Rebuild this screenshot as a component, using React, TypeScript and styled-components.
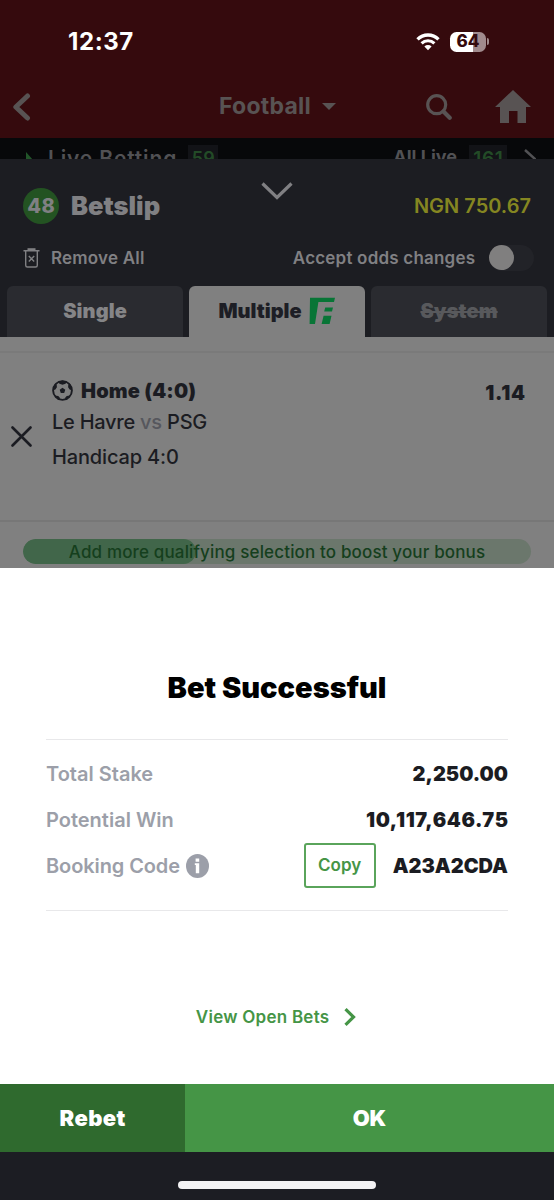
import React from 'react';
import styled, { createGlobalStyle } from 'styled-components';

const GlobalStyle = createGlobalStyle`
  * { box-sizing: border-box; }
  body { margin: 0; background: #1c1d23; }
  button { border: 0; padding: 0; background: none; font: inherit; color: inherit; }
`;

const Screen = styled.main`
  display: flex;
  flex-direction: column;
  width: 554px;
  height: 1200px;
  overflow: hidden;
  font-family: Inter, 'Liberation Sans', sans-serif;
  background: #1c1d23;
`;

interface LabelProps {
  $size: number;
  $weight?: number;
  $color?: string;
  $track?: number;
}
const Label = styled.span<LabelProps>`
  font-size: ${p => p.$size}px;
  font-weight: ${p => p.$weight ?? 600};
  color: ${p => p.$color ?? 'inherit'};
  letter-spacing: ${p => p.$track ?? 0}px;
  margin-right: ${p => -(p.$track ?? 0)}px;
  line-height: 1.2;
  white-space: nowrap;
`;

const Top = styled.header`
  flex: none;
  height: 138px;
  background: #350a0d;
`;
const StatusBar = styled.div`
  display: flex;
  align-items: center;
  justify-content: space-between;
  height: 83px;
  padding: 0 65px 0 68px;
  color: #fff;
`;
const Clock = styled.div`
  padding-top: 1px;
`;
const StatusIcons = styled.div`
  display: flex;
  align-items: center;
  gap: 10px;
`;
const BatteryWrap = styled.div`
  display: flex;
  align-items: center;
  gap: 1px;
`;
const Battery = styled.div`
  display: flex;
  align-items: center;
  justify-content: center;
  width: 36px;
  height: 20px;
  border-radius: 6.5px;
  background: linear-gradient(90deg, #fff 64%, #a18b8d 64%);
`;
const BatteryTip = styled.div`
  width: 2px;
  height: 7px;
  border-radius: 0 3px 3px 0;
  background: #a18b8d;
`;
const NavBar = styled.nav`
  display: grid;
  grid-template-columns: 207px 1fr 105px;
  align-items: center;
  height: 47px;
  padding: 0 23px 0 12px;
  color: #585353;
`;
const SportPicker = styled.div`
  display: flex;
  align-items: center;
  gap: 11px;
  padding-top: 1px;
`;
const NavActions = styled.div`
  display: flex;
  align-items: center;
  justify-content: space-between;
`;

const LiveStrip = styled.div`
  flex: none;
  display: flex;
  justify-content: space-between;
  height: 21px;
  padding: 7px 18px 0 26px;
  overflow: hidden;
  background: #07080a;
  color: #515154;
`;
const LiveGroup = styled.div`
  display: flex;
  align-items: flex-start;
`;
const LiveTitle = styled.div`
  margin: 1px 12px 0 0;
`;
const LiveCount = styled.div<{ $width: number }>`
  display: flex;
  justify-content: center;
  width: ${p => p.$width}px;
  height: 28px;
  padding-top: 3px;
  background: #121317;
`;

const Betslip = styled.section`
  flex: none;
  display: flex;
  flex-direction: column;
  height: 409px;
  background: #1c1d22;
  color: #808083;
`;
const SlipHeader = styled.div`
  display: grid;
  grid-template-columns: 1fr 32px 1fr;
  height: 79px;
  padding: 15px 23px 0 23px;
`;
const SlipTitle = styled.div`
  display: flex;
  align-items: center;
  gap: 12px;
`;
const CountBadge = styled.div`
  display: flex;
  align-items: center;
  justify-content: center;
  width: 36px;
  height: 36px;
  border-radius: 50%;
  background: #235322;
`;
const Collapse = styled.button`
  align-self: start;
  height: 37px;
`;
const Balance = styled.div`
  display: flex;
  align-items: center;
  justify-content: flex-end;
`;
const SlipOptions = styled.div`
  display: flex;
  align-items: center;
  justify-content: space-between;
  height: 42px;
  padding: 0 20px 2px 23px;
`;
const Option = styled.div`
  display: flex;
  align-items: center;
`;
const RemoveLabel = styled.div`
  margin-left: 11px;
`;
const Toggle = styled.div`
  width: 45px;
  height: 26px;
  margin-left: 14px;
  border-radius: 13px;
  background: #222328;
`;
const Knob = styled.div`
  width: 25px;
  height: 25px;
  border-radius: 50%;
  background: #807f7f;
`;
const Tabs = styled.div`
  display: grid;
  grid-template-columns: repeat(3, 176px);
  gap: 6px;
  height: 57px;
  padding: 6px 7px 0;
`;
const Tab = styled.button<{ $active?: boolean; $disabled?: boolean }>`
  display: flex;
  align-items: center;
  justify-content: center;
  gap: 7px;
  padding-bottom: 1px;
  border-radius: 6px 6px 0 0;
  background: ${p => (p.$active ? '#808080' : '#2a2b30')};
  color: ${p => (p.$active ? '#1d1e25' : p.$disabled ? '#58595c' : '#858587')};
  text-decoration: ${p => (p.$disabled ? 'line-through' : 'none')};
  text-decoration-thickness: 2px;
`;
const SlipBody = styled.div`
  flex: 1;
  background: #808080;
  padding-top: 14px;
  color: #1b1c22;
`;
const Selection = styled.article`
  display: grid;
  grid-template-columns: 41px 1fr auto;
  height: 171px;
  padding: 25px 29px 0 11px;
  border-top: 2px solid #7a7a7a;
  border-bottom: 2px solid #777;
`;
const RemoveCell = styled.div`
  padding-top: 48px;
`;
const Pick = styled.div`
  display: flex;
  flex-direction: column;
`;
const PickLine = styled.div<{ $height: number }>`
  display: flex;
  align-items: center;
  gap: 8px;
  height: ${p => p.$height}px;
`;
const Odds = styled.div`
  padding-top: 3px;
`;
const BonusBar = styled.div`
  display: flex;
  align-items: center;
  height: 25px;
  margin: 17px 23px 0;
  border-radius: 13px;
  background: #6b776c;
  overflow: hidden;
`;
const BonusFill = styled.div`
  flex: none;
  width: 173px;
  height: 25px;
  margin-right: -173px;
  border-radius: 13px;
  background: #41664a;
`;
const BonusText = styled.div`
  flex: none;
  width: 508px;
  padding-top: 1px;
  text-align: center;
  z-index: 1;
`;

const Receipt = styled.section`
  flex: none;
  height: 516px;
  padding: 102px 46px 0;
  background: #fff;
`;
const ReceiptTitle = styled.h1`
  display: flex;
  justify-content: center;
  align-items: center;
  height: 36px;
  margin: 0 0 33px;
  color: #000;
`;
const Details = styled.dl`
  height: 172px;
  margin: 0;
  padding-top: 11px;
  border-top: 1px solid #e8e8ea;
  border-bottom: 1px solid #e8e8ea;
`;
const DetailRow = styled.div`
  display: flex;
  align-items: center;
  justify-content: space-between;
  height: 46px;
`;
const Term = styled.dt`
  display: flex;
  align-items: center;
  gap: 6px;
  color: #9c9fa9;
`;
const Value = styled.dd`
  display: flex;
  align-items: center;
  gap: 17px;
  margin: 0;
  color: #1b1c22;
`;
const CopyButton = styled.button`
  width: 72px;
  height: 45px;
  margin-bottom: 1px;
  border: 2px solid #5aa45b;
  border-radius: 3px;
  color: #459546;
`;
const OpenBets = styled.div`
  display: flex;
  align-items: center;
  justify-content: center;
  gap: 15px;
  height: 30px;
  margin: 91px 2px 0 0;
  color: #459546;
`;
const Actions = styled.div`
  flex: none;
  display: grid;
  grid-template-columns: 185px 1fr;
  height: 68px;
  color: #fff;
`;
const ActionButton = styled.button<{ $primary?: boolean }>`
  background: ${p => (p.$primary ? '#459546' : '#2f6a2e')};
`;
const HomeArea = styled.footer`
  flex: 1;
  display: flex;
  justify-content: center;
  padding-top: 29px;
`;
const HomeIndicator = styled.div`
  width: 198px;
  height: 8px;
  border-radius: 4px;
  background: #f3f2f4;
`;

const WifiIcon = () => (
  <svg width="24" height="18" viewBox="0 0 24 18" fill="none" stroke="#fff">
    <path d="M1.5 6.4C7.3.5 16.7.5 22.5 6.4" strokeWidth="3.3" />
    <path d="M5.6 10.3c3.6-3.5 9.2-3.5 12.8 0" strokeWidth="3.1" />
    <path d="M8.4 13.6a5.1 5.1 0 0 1 7.2 0L12 17.3z" fill="#fff" stroke="none" />
  </svg>
);
const BackIcon = () => (
  <svg width="20" height="28" viewBox="0 0 20 28" fill="none" stroke="currentColor" strokeWidth="5" strokeLinecap="round" strokeLinejoin="round">
    <path d="M15.5 3 3.8 14l11.7 11" />
  </svg>
);
const SearchIcon = () => (
  <svg width="26" height="26" viewBox="0 0 26 26" fill="none" stroke="currentColor">
    <circle cx="10.7" cy="10.7" r="9" strokeWidth="3.2" />
    <path d="m17.5 17.5 6.2 6.2" strokeWidth="4.2" strokeLinecap="round" />
  </svg>
);
const HomeIcon = () => (
  <svg width="36" height="33" viewBox="0 0 36 33" fill="currentColor">
    <path d="M18 0 36 17h-5v16h-8.5V21h-8.5v12H5V17H0z" />
  </svg>
);
const TrashIcon = () => (
  <svg width="17" height="20" viewBox="0 0 17 20" fill="none" stroke="currentColor" strokeWidth="1.4">
    <path d="M.5 2.8h16M2.7 3v14.2c0 1 .7 1.8 1.7 1.8h8.2c1 0 1.7-.8 1.7-1.8V3M5.8 8l5.4 5.5M11.2 8l-5.4 5.5" />
    <path d="M4.5 1.3h8" strokeWidth="2.2" />
  </svg>
);
const BoostLogo = () => (
  <svg width="27" height="28" viewBox="0 0 27 28" fill="#087536">
    <path d="M1 .8H26L25 5H9.4L6 27H.6z" />
    <path d="M16.2 10.5h7.8l-1 4h-7.8zM14.6 18.7h7.9L20.6 27h-8z" />
  </svg>
);
const BallIcon = () => (
  <svg width="21" height="21" viewBox="0 0 21 21" fill="none" stroke="currentColor">
    <circle cx="10.5" cy="10.5" r="9.4" strokeWidth="1.9" />
    <path fill="currentColor" stroke="none" d="m10.5 7.8 2.8 2-1.1 3.3H8.8L7.7 9.8zM6 1.7l1.5 2.1 3 .9 3-.9L15 1.7 10.5.6zM1 10.2l2.4-.8 1.5-2.2-.2-2.8-2-.4zM20 10.2l-2.4-.8-1.5-2.2.2-2.8 2-.4zM2.8 15.4l3.4.6 1.5 1.6.3 2.4-2 0zM18.2 15.4l-3.4.6-1.5 1.6-.3 2.4 2 0z" />
  </svg>
);
const InfoIcon = () => (
  <svg width="23" height="24" viewBox="0 0 23 24">
    <ellipse cx="11.5" cy="12" rx="11.5" ry="12" fill="#9c9fa9" />
    <path d="M9.6 4.6h3.6v3.1H9.6zM8.8 9.3h4.4v10H9.8v-8.2h-1z" fill="#fff" />
  </svg>
);

export default function App() {
  return (
    <>
      <GlobalStyle />
      <Screen>
        <Top>
          <StatusBar>
            <Clock><Label $size={24} $weight={700} $track={0.6}>12:37</Label></Clock>
            <StatusIcons>
              <WifiIcon />
              <BatteryWrap>
                <Battery><Label $size={17} $weight={800} $track={0.2} $color="#350a0d">64</Label></Battery>
                <BatteryTip />
              </BatteryWrap>
            </StatusIcons>
          </StatusBar>
          <NavBar>
            <BackIcon />
            <SportPicker>
              <Label $size={23} $weight={700} $track={0.25}>Football</Label>
              <svg width="14" height="8" viewBox="0 0 14 8" fill="currentColor"><path d="M0 0h14L7 7z" /></svg>
            </SportPicker>
            <NavActions><SearchIcon /><HomeIcon /></NavActions>
          </NavBar>
        </Top>

        <LiveStrip>
          <LiveGroup>
            <svg width="22" height="24" viewBox="0 0 22 24"><path d="M0 7 7 15 0 22z" fill="#22552a" /></svg>
            <LiveTitle><Label $size={21} $weight={600} $track={0.85}>Live Betting</Label></LiveTitle>
            <LiveCount $width={30}><Label $size={18} $weight={600} $color="#234b27">59</Label></LiveCount>
          </LiveGroup>
          <LiveGroup>
            <LiveTitle><Label $size={18} $weight={700}>All Live</Label></LiveTitle>
            <LiveCount $width={38}><Label $size={19} $weight={600} $track={0.6} $color="#234b27">161</Label></LiveCount>
            <svg width="29" height="22" viewBox="0 0 29 22" fill="none" stroke="currentColor" strokeWidth="2.5"><path d="m18 5 10 9-10 9" /></svg>
          </LiveGroup>
        </LiveStrip>

        <Betslip>
          <SlipHeader>
            <SlipTitle>
              <CountBadge><Label $size={20} $weight={800} $track={0.4}>48</Label></CountBadge>
              <Label $size={25.5} $weight={900}>Betslip</Label>
            </SlipTitle>
            <Collapse>
              <svg width="32" height="18" viewBox="0 0 32 18" fill="none" stroke="currentColor" strokeWidth="3.2"><path d="m1.5 1.5 14.5 14 14.5-14" /></svg>
            </Collapse>
            <Balance><Label $size={20} $weight={600} $color="#858621">NGN 750.67</Label></Balance>
          </SlipHeader>
          <SlipOptions>
            <Option>
              <TrashIcon />
              <RemoveLabel><Label $size={17} $weight={600} $track={0.2}>Remove All</Label></RemoveLabel>
            </Option>
            <Option>
              <Label $size={17} $weight={600} $track={0.2}>Accept odds changes</Label>
              <Toggle><Knob /></Toggle>
            </Option>
          </SlipOptions>
          <Tabs>
            <Tab><Label $size={20} $weight={900} $track={0.1}>Single</Label></Tab>
            <Tab $active><Label $size={20} $weight={900}>Multiple</Label><BoostLogo /></Tab>
            <Tab $disabled><Label $size={20} $weight={900} $track={0.1}>System</Label></Tab>
          </Tabs>
          <SlipBody>
            <Selection>
              <RemoveCell>
                <svg width="21" height="21" viewBox="0 0 21 21" stroke="currentColor" strokeWidth="2.6" strokeLinecap="round"><path d="m1.5 1.5 18 18m0-18-18 18" /></svg>
              </RemoveCell>
              <Pick>
                <PickLine $height={25}><BallIcon /><Label $size={20} $weight={900} $track={0.15}>Home (4:0)</Label></PickLine>
                <PickLine $height={37}>
                  <Label $size={20} $weight={500} $track={-0.25}>Le Havre <Label $size={20} $weight={500} $track={-0.25} $color="#56575d">vs</Label> PSG</Label>
                </PickLine>
                <PickLine $height={33}><Label $size={20} $weight={500} $track={-0.15}>Handicap 4:0</Label></PickLine>
              </Pick>
              <Odds><Label $size={20} $weight={900} $track={0.7}>1.14</Label></Odds>
            </Selection>
            <BonusBar>
              <BonusFill />
              <BonusText><Label $size={17} $weight={500} $track={0.15} $color="#153f1d">Add more qualifying selection to boost your bonus</Label></BonusText>
            </BonusBar>
          </SlipBody>
        </Betslip>

        <Receipt>
          <ReceiptTitle><Label $size={29} $weight={900}>Bet Successful</Label></ReceiptTitle>
          <Details>
            <DetailRow>
              <Term><Label $size={20}>Total Stake</Label></Term>
              <Value><Label $size={20} $weight={900}>2,250.00</Label></Value>
            </DetailRow>
            <DetailRow>
              <Term><Label $size={20}>Potential Win</Label></Term>
              <Value><Label $size={20} $weight={900} $track={0.6}>10,117,646.75</Label></Value>
            </DetailRow>
            <DetailRow>
              <Term><Label $size={20} $track={-0.1}>Booking Code</Label><InfoIcon /></Term>
              <Value>
                <CopyButton><Label $size={17}>Copy</Label></CopyButton>
                <Label $size={20} $weight={900}>A23A2CDA</Label>
              </Value>
            </DetailRow>
          </Details>
          <OpenBets>
            <Label $size={17} $track={0.25}>View Open Bets</Label>
            <svg width="12" height="18" viewBox="0 0 12 18" fill="none" stroke="currentColor" strokeWidth="3.2"><path d="m1.5 1.2 8 7.8-8 7.8" /></svg>
          </OpenBets>
        </Receipt>
        <Actions>
          <ActionButton><Label $size={22} $weight={900} $track={0.4}>Rebet</Label></ActionButton>
          <ActionButton $primary><Label $size={22} $weight={900} $track={-0.4}>OK</Label></ActionButton>
        </Actions>
        <HomeArea><HomeIndicator /></HomeArea>
      </Screen>
    </>
  );
}
